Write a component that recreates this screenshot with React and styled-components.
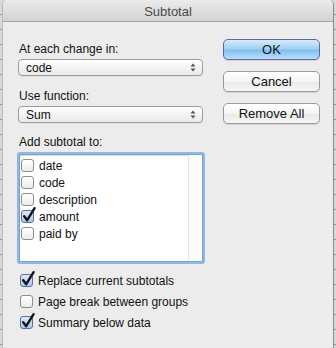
import React, { useState } from 'react';
import styled, { createGlobalStyle } from 'styled-components';

const GlobalStyle = createGlobalStyle`
  html, body { margin: 0; padding: 0; }
  body {
    font-family: "Liberation Sans", Arial, sans-serif;
    background: #c9c9c9;
  }
`;

// spreadsheet peeking out behind the sheet dialog
const Backdrop = styled.div`
  width: 336px;
  height: 348px;
  display: flex;
  background-color: #d8d8d8;
  background-image: repeating-linear-gradient(
    to bottom,
    transparent 0,
    transparent 14px,
    #9a9a9a 14px,
    #9a9a9a 15px
  );
  overflow: hidden;
`;

const Dialog = styled.div`
  margin-left: 2px;
  width: 330px;
  height: 348px;
  background: #ececec;
  border-left: 1px solid #b8b8b8;
  border-right: 1px solid #8a8a8a;
  border-top-right-radius: 5px;
  border-top-left-radius: 5px;
  display: flex;
  flex-direction: column;
  overflow: hidden;
`;

const TitleBar = styled.div`
  height: 22px;
  flex: none;
  background: linear-gradient(to bottom, #ebebeb, #d2d2d2);
  border-bottom: 1px solid #a5a5a5;
  display: flex;
  align-items: center;
  justify-content: center;
  font-size: 13px;
  color: #4a4a4a;
  padding-top: 1px;
  box-sizing: border-box;
`;

const Body = styled.div`
  display: flex;
  padding: 19px 12px 0 14px;
`;

const LeftCol = styled.div`
  width: 186px;
  display: flex;
  flex-direction: column;
`;

const RightCol = styled.div`
  display: flex;
  flex-direction: column;
  gap: 11px;
  margin-left: 20px;
  margin-top: -2px;
`;

const Label = styled.div`
  font-size: 12px;
  color: #111;
  height: 16px;
  line-height: 16px;
  margin-left: 2px;
  margin-bottom: ${p => p.$gap ?? 2}px;
`;

const Select = styled.div`
  height: 17px;
  box-sizing: border-box;
  border: 1px solid #9c9c9c;
  border-radius: 4px;
  background: linear-gradient(to bottom, #ffffff, #f3f3f3 50%, #e9e9e9);
  display: flex;
  align-items: center;
  justify-content: space-between;
  padding: 0 6px 0 7px;
  font-size: 12px;
  color: #111;
  margin-left: 1px;
  margin-bottom: ${p => p.$gap || 0}px;
  box-shadow: 0 1px 0 rgba(0,0,0,0.05);
`;

const Arrows = () => (
  <svg width="6" height="9" viewBox="0 0 6 9">
    <path d="M3 0.5 L5.5 3.5 H0.5 Z" fill="#555" />
    <path d="M3 8.5 L5.5 5.5 H0.5 Z" fill="#555" />
  </svg>
);

const Button = styled.div`
  width: 97px;
  height: 21px;
  box-sizing: border-box;
  border-radius: 5px;
  border: 1px solid ${p => (p.$primary ? '#6b5fa6' : '#9a9a9a')};
  background: ${p =>
    p.$primary
      ? 'linear-gradient(to bottom, #d4ebfb 0%, #a2d0f3 48%, #7fbdef 52%, #b6e0fb 100%)'
      : 'linear-gradient(to bottom, #ffffff, #f4f4f4 50%, #e9e9e9 52%, #f6f6f6)'};
  display: flex;
  align-items: center;
  justify-content: center;
  font-size: 13px;
  color: #111;
  box-shadow: 0 1px 1px rgba(0,0,0,0.12);
`;

const ListBox = styled.div`
  margin-top: 4px;
  height: 108px;
  box-sizing: border-box;
  background: #fff;
  border: 1px solid #7a9fcf;
  box-shadow: 0 0 0 2px #8fb8e6, inset 0 1px 1px rgba(0,0,0,0.15);
  border-radius: 1px;
  display: flex;
  margin-left: 2px;
`;

const ListItems = styled.div`
  flex: 1;
  padding-top: 2px;
`;

const Scroller = styled.div`
  width: 13px;
  border-left: 1px solid #e6e6e6;
  background: #fbfbfb;
`;

const Row = styled.label`
  display: flex;
  align-items: center;
  height: ${p => p.$h || 17}px;
  font-size: 12px;
  color: #111;
  gap: 5px;
  white-space: nowrap;
  padding-left: ${p => p.$indent || 1}px;
  cursor: default;
`;

const Box = styled.span`
  position: relative;
  width: 13px;
  height: 13px;
  box-sizing: border-box;
  border: 1px solid ${p => (p.$on ? '#5a6ea0' : '#8e8e8e')};
  border-radius: 3px;
  background: ${p =>
    p.$on
      ? 'linear-gradient(to bottom, #dcebf9, #a9c9ec)'
      : 'linear-gradient(to bottom, #ffffff, #ececec)'};
  flex: none;
`;

const Tick = styled.svg`
  position: absolute;
  left: 0px;
  top: -4px;
`;

const Check = ({ on, onToggle }) => (
  <Box $on={on} onClick={onToggle}>
    {on && (
      <Tick width="14" height="16" viewBox="0 0 14 16">
        <path
          d="M2.2 9.2 L5.2 13.2 L12.6 1.2"
          fill="none"
          stroke="#101418"
          strokeWidth="2.4"
          strokeLinecap="round"
          strokeLinejoin="round"
        />
      </Tick>
    )}
  </Box>
);

const Options = styled.div`
  margin-top: 8px;
  display: flex;
  flex-direction: column;
`;

const App = () => {
  const [fields, setFields] = useState([
    { name: 'date', on: false },
    { name: 'code', on: false },
    { name: 'description', on: false },
    { name: 'amount', on: true },
    { name: 'paid by', on: false },
  ]);
  const [opts, setOpts] = useState([
    { name: 'Replace current subtotals', on: true },
    { name: 'Page break between groups', on: false },
    { name: 'Summary below data', on: true },
  ]);

  const toggle = (list, setList, i) =>
    setList(list.map((f, j) => (j === i ? { ...f, on: !f.on } : f)));

  return (
    <Backdrop>
      <GlobalStyle />
      <Dialog>
        <TitleBar>Subtotal</TitleBar>
        <Body>
          <LeftCol>
            <Label>At each change in:</Label>
            <Select $gap={12}>
              code
              <Arrows />
            </Select>
            <Label>Use function:</Label>
            <Select $gap={11}>
              Sum
              <Arrows />
            </Select>
            <Label $gap={0}>Add subtotal to:</Label>
            <ListBox>
              <ListItems>
                {fields.map((f, i) => (
                  <Row key={f.name}>
                    <Check on={f.on} onToggle={() => toggle(fields, setFields, i)} />
                    {f.name}
                  </Row>
                ))}
              </ListItems>
              <Scroller />
            </ListBox>
            <Options>
              {opts.map((o, i) => (
                <Row key={o.name} $h={21} $indent={3}>
                  <Check on={o.on} onToggle={() => toggle(opts, setOpts, i)} />
                  {o.name}
                </Row>
              ))}
            </Options>
          </LeftCol>
          <RightCol>
            <Button $primary>OK</Button>
            <Button>Cancel</Button>
            <Button>Remove All</Button>
          </RightCol>
        </Body>
      </Dialog>
    </Backdrop>
  );
};

export default App;
